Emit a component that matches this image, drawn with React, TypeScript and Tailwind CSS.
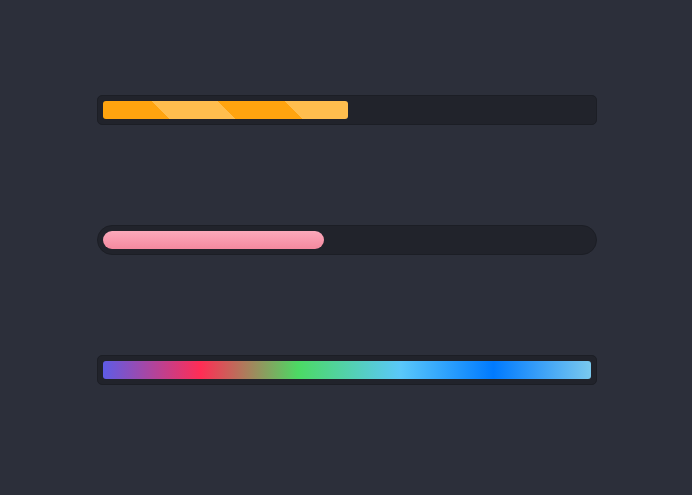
export default function App() {
  return (
    <div className="min-h-[495px] w-full bg-[#2c2f3a] pl-[97px] pt-[95px]">
      <div className="flex w-[500px] flex-col gap-[100px]">
        <div className="h-[30px] rounded-[5px] border border-[#1c1e25] bg-[#21232b] p-[5px]">
          <div className="h-[18px] w-[245px] rounded-[3px] bg-[repeating-linear-gradient(45deg,#ffa40f_0_47px,#ffbe4e_47px_94px)]" />
        </div>
        <div className="h-[30px] rounded-full border border-[#1c1e25] bg-[#21232b] p-[5px]">
          <div className="h-[18px] w-[221px] rounded-full bg-gradient-to-b from-[#fba9bb] to-[#f4899f]" />
        </div>
        <div className="h-[30px] rounded-[5px] border border-[#1c1e25] bg-[#21232b] p-[5px]">
          <div className="h-[18px] w-full rounded-[3px] bg-[linear-gradient(to_right,#5e5ce6_0%,#ff2d55_20%,#4cd964_40%,#5ac8fa_61%,#007aff_80%,#7ac9ee_100%)]" />
        </div>
      </div>
    </div>
  );
}
